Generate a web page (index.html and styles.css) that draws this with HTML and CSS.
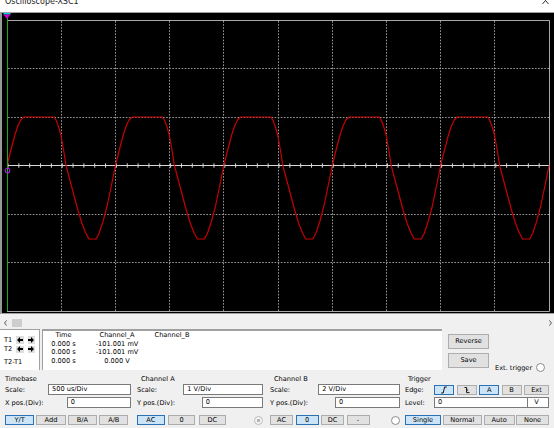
FILE: index.html
```html
<!DOCTYPE html>
<html lang="en">
<head>
    <meta charset="UTF-8">
    <title>Oscilloscope-XSC1</title>
    <link rel="stylesheet" href="styles.css">
</head>
<body>

<div class="titlebar">
    <span class="title">Oscilloscope-XSC1</span>
    <svg class="close" width="7" height="9" viewBox="0 0 7 9"><path d="M0.5,1 L6.5,8 M6.5,1 L0.5,8"/></svg>
</div>

<!-- Pantalla del osciloscopio -->
<div class="screen">
    <svg width="554" height="300" viewBox="0 13 554 300">
        <defs>
            <path id="cycle" d="M0,0 L4,-16 8,-31 11,-40 14,-46 17,-48.5 47,-48.5 49,-45.5 51.5,-39 54,-30 56.5,-16 59,0 63,15 67,30 71,45 75,58 78.5,67 82,73.5 89,73.5 92,68 96,56 100,41 104,22 108.4,0"/>
        </defs>
        <rect x="0" y="13" width="554" height="300" fill="#000"/>
        <rect x="0" y="13" width="2" height="300" fill="#9a9a9a"/>
        <path class="grid" d="M61.5,21V311M115.5,21V311M169.5,21V311M223.5,21V311M278.5,21V311M332.5,21V311M386.5,21V311M440.5,21V311M494.5,21V311"/>
        <path class="grid" d="M8,68.5H549M8,117.5H549M8,214.5H549M8,262.5H549"/>
        <path class="frame" d="M7,20.5H549.5V311.5H7"/>
        <path class="axis" d="M7,165.5H549"/>
        <path class="ticks" d="M7.5,165.5H549"/>
        <g class="trace">
            <use href="#cycle" x="7" y="165.5"/>
            <use href="#cycle" x="115.4" y="165.5"/>
            <use href="#cycle" x="223.8" y="165.5"/>
            <use href="#cycle" x="332.2" y="165.5"/>
            <use href="#cycle" x="440.6" y="165.5"/>
        </g>
        <path class="cursor" d="M7.5,18V311"/>
        <rect x="3.5" y="13" width="7" height="1.5" fill="#00d8e8"/>
        <path d="M3.5,14.5 H10.5 L7,19 Z" fill="#d000d0"/>
        <circle cx="7.5" cy="170.5" r="2.3" fill="none" stroke="#a020d0" stroke-width="1.1"/>
    </svg>
</div>

<div class="hscroll">
    <svg class="chev" width="3" height="6" viewBox="0 0 3 6"><path d="M2.6,0.4 L0.6,3 L2.6,5.6"/></svg>
    <div class="thumb"></div>
    <div class="spacer"></div>
    <svg class="chev" width="3" height="6" viewBox="0 0 3 6"><path d="M0.4,0.4 L2.4,3 L0.4,5.6"/></svg>
</div>

<!-- Lecturas de los cursores -->
<div class="readout">
    <div class="cursors">
        <div class="cur-row">
            <span class="cur-name">T1</span>
            <span class="arrow"><svg width="6" height="6" viewBox="0 0 7 7"><path d="M0,3.5 3.5,0 3.5,2.2 7,2.2 7,4.8 3.5,4.8 3.5,7Z"/></svg></span>
            <span class="arrow"><svg width="6" height="6" viewBox="0 0 7 7"><path d="M7,3.5 3.5,0 3.5,2.2 0,2.2 0,4.8 3.5,4.8 3.5,7Z"/></svg></span>
        </div>
        <div class="cur-row">
            <span class="cur-name">T2</span>
            <span class="arrow"><svg width="6" height="6" viewBox="0 0 7 7"><path d="M0,3.5 3.5,0 3.5,2.2 7,2.2 7,4.8 3.5,4.8 3.5,7Z"/></svg></span>
            <span class="arrow"><svg width="6" height="6" viewBox="0 0 7 7"><path d="M7,3.5 3.5,0 3.5,2.2 0,2.2 0,4.8 3.5,4.8 3.5,7Z"/></svg></span>
        </div>
        <div class="cur-row diff">T2-T1</div>
    </div>

    <div class="data">
        <span>Time</span><span>Channel_A</span><span>Channel_B</span>
        <span>0.000 s</span><span>-101.001 mV</span><span></span>
        <span>0.000 s</span><span>-101.001 mV</span><span></span>
        <span>0.000 s</span><span>0.000 V</span><span></span>
    </div>

    <div class="side">
        <div class="sbtns">
            <div class="bigbtn">Reverse</div>
            <div class="bigbtn">Save</div>
        </div>
        <div class="ext">Ext. trigger <span class="radio"></span></div>
    </div>
</div>

<!-- Controles -->
<div class="controls">
    <div class="group tb">
        <div class="legend">Timebase</div>
        <div class="row"><span>Scale:</span><div class="field scale">500 us/Div</div></div>
        <div class="row pos"><span>X pos.(Div):</span><div class="field offs">0</div></div>
        <div class="btns">
            <div class="btn on">Y/T</div>
            <div class="btn">Add</div>
            <div class="btn">B/A</div>
            <div class="btn">A/B</div>
        </div>
    </div>

    <div class="group cha">
        <div class="legend">Channel A</div>
        <div class="row"><span>Scale:</span><div class="field scale">1 V/Div</div></div>
        <div class="row pos"><span>Y pos.(Div):</span><div class="field offs">0</div></div>
        <div class="btns">
            <div class="btn on">AC</div>
            <div class="btn">0</div>
            <div class="btn">DC</div>
            <span class="radio off"></span>
        </div>
    </div>

    <div class="group chb">
        <div class="legend">Channel B</div>
        <div class="row"><span>Scale:</span><div class="field scale">2 V/Div</div></div>
        <div class="row pos"><span>Y pos.(Div):</span><div class="field offs">0</div></div>
        <div class="btns">
            <div class="btn">AC</div>
            <div class="btn on">0</div>
            <div class="btn">DC</div>
            <div class="btn">-</div>
            <span class="radio"></span>
        </div>
    </div>

    <div class="group trig">
        <div class="legend">Trigger</div>
        <div class="row">
            <span>Edge:</span>
            <div class="ebtns">
                <div class="btn on"><svg width="8" height="8" viewBox="0 0 8 8"><path d="M1.2,7 H3.2 L4.6,1 H6.8"/></svg></div>
                <div class="btn"><svg width="8" height="8" viewBox="0 0 8 8"><path d="M1.5,1.5 H3.6 V6.6 H6.5 M3.6,4 H5.2"/></svg></div>
                <div class="btn on">A</div>
                <div class="btn">B</div>
                <div class="btn ext-btn">Ext</div>
            </div>
        </div>
        <div class="row pos">
            <span>Level:</span>
            <div class="lvl"><div class="field level">0</div><div class="field unit">V</div></div>
        </div>
        <div class="btns">
            <div class="btn on">Single</div>
            <div class="btn">Normal</div>
            <div class="btn">Auto</div>
            <div class="btn">None</div>
        </div>
    </div>
</div>

</body>
</html>
```

FILE: styles.css
```css
/* Ventana del osciloscopio */
body {
    margin: 0;
    width: 554px;
    height: 428px;
    overflow: hidden;
    background-color: #f0f0f0;
    font-family: "DejaVu Sans", Verdana, sans-serif;
    font-size: 6.6px;
    color: #000;
}

.titlebar {
    height: 12px;
    box-sizing: border-box;
    padding: 0 5px;
    background-color: #fff;
    display: flex;
    justify-content: space-between;
    overflow: hidden;
}

.title {
    font-size: 8px;
    line-height: 8px;
    margin-top: -2px;
    color: #1a1a1a;
}

.close {
    margin-top: -4px;
}

.close path {
    stroke: #333;
    stroke-width: 1;
}

/* Pantalla */
.screen {
    border-top: 1px solid #a0a0a0;
    height: 300px;
}

.screen svg {
    display: block;
}

.grid {
    fill: none;
    stroke: #9a9a9a;
    stroke-width: 1;
    stroke-dasharray: 1.6 1.5;
}

.frame {
    fill: none;
    stroke: #a8a8a8;
    stroke-width: 1;
}

.axis {
    stroke: #d8d8d8;
    stroke-width: 1;
}

.ticks {
    stroke: #d8d8d8;
    stroke-width: 4.5;
    stroke-dasharray: 1 9.84;
}

.trace {
    fill: none;
    stroke: #c80000;
    stroke-width: 1.2;
    stroke-linejoin: round;
}

.cursor {
    stroke: #1ea81e;
    stroke-width: 1;
}

/* Barra de desplazamiento */
.hscroll {
    height: 14px;
    border-top: 1px solid #a0a0a0;
    display: flex;
    align-items: flex-start;
    padding: 0 2px 0 4px;
}

.chev {
    margin-top: 6px;
}

.chev path {
    fill: none;
    stroke: #444;
    stroke-width: 0.9;
}

.thumb {
    width: 10px;
    height: 8px;
    margin: 5px 0 0 5px;
    background-color: #cdcdcd;
}

.spacer {
    flex: 1;
}

/* Lecturas */
.readout {
    display: flex;
    height: 41px;
    margin-top: 1px;
}

.cursors {
    width: 40px;
    box-sizing: border-box;
    padding: 5px 0 0 4px;
    background-color: #fff;
    border-top: 1px solid #a0a0a0;
    border-right: 1px solid #a0a0a0;
}

.cur-row {
    display: flex;
    align-items: center;
    height: 9.5px;
}

.cur-row.diff {
    margin-top: 3px;
}

.cur-name {
    width: 12.5px;
}

.arrow {
    width: 7.5px;
    height: 7.5px;
    margin-right: 4px;
    background-color: #dedede;
    display: flex;
    align-items: center;
    justify-content: center;
}

.arrow path {
    fill: #000;
}

.data {
    width: 400px;
    margin-left: 2px;
    box-sizing: border-box;
    background-color: #fff;
    border-top: 2px solid #a0a0a0;
    border-left: 1px solid #a0a0a0;
    display: grid;
    grid-template-columns: 41px 66px 44px;
    grid-auto-rows: 8.7px;
    align-content: start;
    line-height: 8.7px;
    text-align: center;
    white-space: nowrap;
}

.side {
    display: flex;
    margin-left: 6px;
}

.sbtns {
    width: 41px;
    padding-top: 5px;
    display: flex;
    flex-direction: column;
    gap: 4px;
}

.bigbtn {
    height: 15px;
    box-sizing: border-box;
    border: 1px solid #adadad;
    background-color: #e1e1e1;
    line-height: 13px;
    text-align: center;
}

.ext {
    align-self: flex-end;
    display: flex;
    align-items: center;
    gap: 4px;
    margin: 0 0 -2px 6px;
    white-space: nowrap;
}

.radio {
    width: 9px;
    height: 9px;
    box-sizing: border-box;
    border: 1px solid #8c8c8c;
    border-radius: 50%;
    background-color: #fff;
    flex-shrink: 0;
}

.radio.off {
    border-color: #bcbcbc;
    background: radial-gradient(circle, #b4b4b4 0 1.6px, #f4f4f4 2px);
}

/* Grupos de controles */
.controls {
    display: flex;
    height: 58px;
}

.group {
    box-sizing: border-box;
    padding-top: 5px;
    display: flex;
    flex-direction: column;
}

.group.tb {
    width: 134px;
    padding-left: 5px;
    padding-right: 3.3px;
}

.group.cha {
    width: 134px;
    padding-left: 3px;
    padding-right: 4.7px;
}

.group.chb {
    width: 134px;
    padding-left: 2px;
    padding-right: 2px;
}

.group.trig {
    width: 152px;
    padding-left: 3px;
    padding-right: 5px;
}

.legend {
    height: 9px;
    line-height: 9px;
    padding-left: 4px;
}

.tb .legend {
    padding-left: 0;
}

.trig .legend {
    padding-left: 3px;
}

.row {
    display: flex;
    align-items: center;
    justify-content: space-between;
    height: 11px;
    white-space: nowrap;
}

.row.pos {
    margin-top: 2px;
}

.field {
    height: 11px;
    box-sizing: border-box;
    border: 1px solid #7a7a7a;
    background-color: #fff;
    padding-left: 3px;
    line-height: 9px;
    white-space: nowrap;
}

.tb .scale { width: 82.7px; }
.tb .offs { width: 64px; }
.cha .scale { width: 80px; }
.cha .offs { width: 61.6px; }
.chb .scale { width: 81.7px; }
.chb .offs { width: 65px; }

.lvl {
    display: flex;
}

.field.level {
    width: 94.3px;
}

.field.unit {
    width: 21.7px;
    margin-left: -1px;
    padding-left: 6px;
}

.btns {
    display: flex;
    align-items: center;
    height: 10px;
    margin-top: 7px;
}

.btn {
    height: 10px;
    box-sizing: border-box;
    border: 1px solid #adadad;
    background-color: #e1e1e1;
    line-height: 8px;
    text-align: center;
    white-space: nowrap;
    display: flex;
    align-items: center;
    justify-content: center;
}

.btn.on {
    background-color: #cce4f7;
    border-color: #2a72b5;
}

.btn svg path {
    fill: none;
    stroke: #000;
    stroke-width: 0.9;
}

.tb .btns {
    gap: 2.3px;
    margin-right: 2.4px;
}

.tb .btn {
    flex: 1;
}

.cha .btns {
    gap: 3.3px;
}

.cha .btn {
    width: 27.5px;
}

.chb .btns {
    gap: 2.5px;
}

.chb .btn {
    width: 23px;
}

.btns .radio {
    margin-left: auto;
}

.ebtns {
    display: flex;
    gap: 2.4px;
}

.ebtns .btn {
    width: 20px;
}

.ebtns .btn.ext-btn {
    width: 25px;
}

.trig .btns {
    gap: 1.5px;
}

.trig .btns .btn {
    flex: 1 1 auto;
    padding: 0 6px;
}
```
